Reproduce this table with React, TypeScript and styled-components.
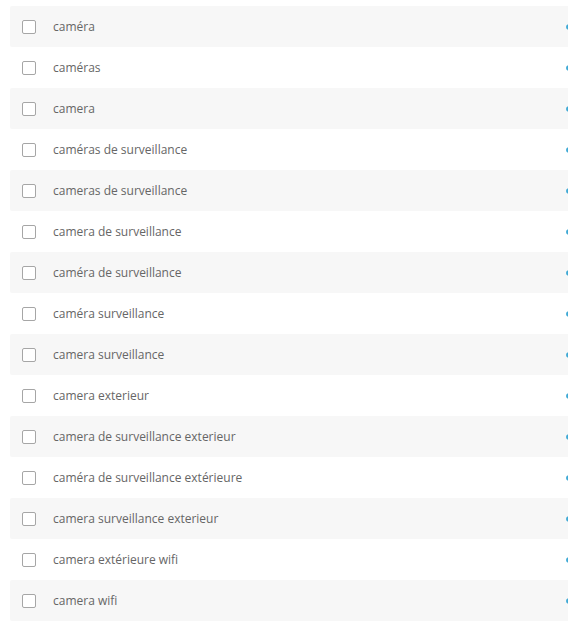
import React from "react";
import styled, { createGlobalStyle } from "styled-components";

const Global = createGlobalStyle`
  html, body { margin: 0; padding: 0; background: #fff; overflow: hidden; }
  body { font-family: "Open Sans", "Noto Sans", sans-serif; }
`;

const List = styled.div`
  padding: 6px 0 0 10px;
  width: 564px;
  display: flex;
  flex-direction: column;
`;

const Row = styled.div<{ $shaded: boolean }>`
  height: 41px;
  display: flex;
  align-items: center;
  padding-left: 12px;
  background: ${(p) => (p.$shaded ? "#f7f7f7" : "#ffffff")};
  border-radius: 2px;
`;

const Box = styled.span`
  width: 14px;
  height: 14px;
  margin-top: 1px;
  box-sizing: border-box;
  border: 1px solid #a6a6a6;
  border-radius: 2px;
  background: #fff;
  flex-shrink: 0;
`;

const Label = styled.span`
  margin-left: 17px;
  font-size: 12px;
  color: #666;
  flex: 1;
  white-space: nowrap;
`;

const Dot = styled.span`
  width: 8px;
  height: 6px;
  border-radius: 50%;
  background: #3fa9d5;
  flex-shrink: 0;
`;

const items = [
  "caméra",
  "caméras",
  "camera",
  "caméras de surveillance",
  "cameras de surveillance",
  "camera de surveillance",
  "caméra de surveillance",
  "caméra surveillance",
  "camera surveillance",
  "camera exterieur",
  "camera de surveillance exterieur",
  "caméra de surveillance extérieure",
  "camera surveillance exterieur",
  "camera extérieure wifi",
  "camera wifi",
];

export default function App() {
  return (
    <>
      <Global />
      <List>
        {items.map((t, i) => (
          <Row key={t} $shaded={i % 2 === 0}>
            <Box />
            <Label>{t}</Label>
            <Dot />
          </Row>
        ))}
      </List>
    </>
  );
}
